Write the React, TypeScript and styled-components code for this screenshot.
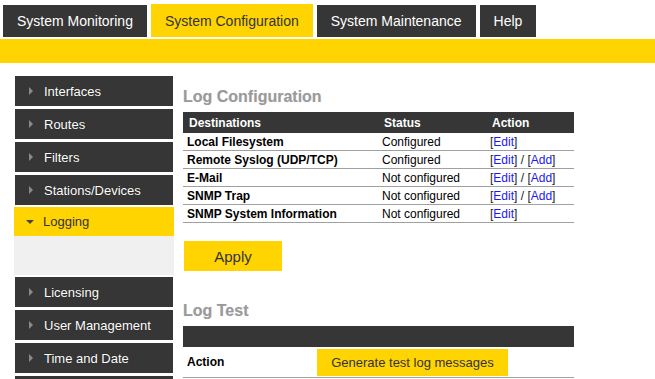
import React from "react";
import styled, { createGlobalStyle } from "styled-components";

const GlobalStyle = createGlobalStyle`
  body {
    margin: 0;
    background: #fff;
    font-family: "Liberation Sans", Arial, sans-serif;
  }
`;

const dark = "#363636";
const yellow = "#ffd400";

const Page = styled.div`
  width: 655px;
  height: 379px;
  overflow: hidden;
`;

const TabBar = styled.div`
  display: flex;
  align-items: flex-end;
  gap: 4px;
  padding: 4px 0 0 3px;
  height: 33px;
  margin-bottom: 2px;
`;

const Tab = styled.div<{ $active?: boolean }>`
  height: ${(p) => (p.$active ? 33 : 32)}px;
  padding: 0 14px;
  display: flex;
  align-items: center;
  font-size: 14px;
  background: ${(p) => (p.$active ? yellow : dark)};
  color: ${(p) => (p.$active ? "#333" : "#fff")};
`;

const SubBar = styled.div`
  height: 24px;
  background: ${yellow};
`;

const Body = styled.div`
  display: grid;
  grid-template-columns: 160px 1fr;
  column-gap: 9px;
  padding: 13px 0 0 14px;
`;

const Side = styled.div`
  display: flex;
  flex-direction: column;
`;

const SideItem = styled.div<{ $open?: boolean; $gap?: number }>`
  height: ${(p) => (p.$open ? 29 : 30)}px;
  margin: ${(p) => (p.$open ? "0" : `0 1px ${p.$gap ?? 3}px 1px`)};
  background: ${(p) => (p.$open ? yellow : dark)};
  color: ${(p) => (p.$open ? "#333" : "#fff")};
  text-shadow: ${(p) => (p.$open ? "none" : "0 0 1px rgba(0,0,0,0.6)")};
  display: flex;
  align-items: center;
  font-size: 13px;
  padding-left: ${(p) => (p.$open ? 12 : 14)}px;
  flex-shrink: 0;
`;

const Arrow = styled.span<{ $open?: boolean }>`
  width: 0;
  height: 0;
  ${(p) =>
    p.$open
      ? `border-left: 4px solid transparent;
         border-right: 4px solid transparent;
         border-top: 4px solid #444;
         margin-right: 9px;`
      : `border-top: 4px solid transparent;
         border-bottom: 4px solid transparent;
         border-left: 4px solid #8a8a8a;
         margin-right: 11px;`}
`;

const SubPanel = styled.div`
  height: 39px;
  background: #f0f0f0;
  margin-bottom: 2px;
  flex-shrink: 0;
`;

const Main = styled.div`
  width: 391px;
`;

const Heading = styled.h2<{ $top: number }>`
  margin: ${(p) => p.$top}px 0 0 0;
  font-size: 16px;
  font-weight: bold;
  color: #9a9a9a;
  text-shadow: 0 0 1px rgba(0, 0, 0, 0.15);
  line-height: 19px;
  height: 25px;
`;

const Table = styled.table`
  width: 391px;
  border-collapse: collapse;
  font-size: 12px;
  color: #000;
`;

const Th = styled.th<{ $w?: number }>`
  background: ${dark};
  color: #fff;
  text-align: left;
  font-weight: bold;
  height: 21px;
  padding: 0 0 0 6px;
  ${(p) => (p.$w ? `width: ${p.$w}px;` : "")}
`;

const Td = styled.td<{ $bold?: boolean }>`
  height: 17px;
  padding: 0 0 0 4px;
  border-bottom: 1px solid #a0a0a0;
  font-weight: ${(p) => (p.$bold ? "bold" : "normal")};
  white-space: nowrap;
`;

const Link = styled.a`
  color: #1a1aee;
  text-decoration: none;
`;

const Bracket = styled.span`
  color: #222;
`;

const YellowButton = styled.button<{ $w: number; $h: number; $size: number }>`
  width: ${(p) => p.$w}px;
  height: ${(p) => p.$h}px;
  background: ${yellow};
  border: none;
  color: #333;
  font-family: "Liberation Sans", Arial, sans-serif;
  font-size: ${(p) => p.$size}px;
  padding: 0;
  cursor: pointer;
`;

const ApplyWrap = styled.div`
  margin: 18px 0 0 1px;
  height: 30px;
`;

const ActionCell = styled.td`
  width: 130px;
  height: 30px;
  padding: 0 0 0 4px;
  border-bottom: 1px solid #a0a0a0;
  font-weight: bold;
`;

const ButtonCell = styled.td`
  height: 30px;
  padding: 0;
  border-bottom: 1px solid #a0a0a0;
  vertical-align: middle;
`;

const tabs = ["System Monitoring", "System Configuration", "System Maintenance", "Help"];
const topItems = ["Interfaces", "Routes", "Filters", "Stations/Devices"];
const bottomItems = ["Licensing", "User Management", "Time and Date"];

const rows = [
  { dest: "Local Filesystem", status: "Configured", add: false },
  { dest: "Remote Syslog (UDP/TCP)", status: "Configured", add: true },
  { dest: "E-Mail", status: "Not configured", add: true },
  { dest: "SNMP Trap", status: "Not configured", add: true },
  { dest: "SNMP System Information", status: "Not configured", add: false },
];

function Action({ add }: { add: boolean }) {
  return (
    <>
      <Bracket>[</Bracket>
      <Link href="#">Edit</Link>
      <Bracket>]</Bracket>
      {add && (
        <>
          <Bracket> / [</Bracket>
          <Link href="#">Add</Link>
          <Bracket>]</Bracket>
        </>
      )}
    </>
  );
}

export default function App() {
  return (
    <Page>
      <GlobalStyle />
      <TabBar>
        {tabs.map((t) => (
          <Tab key={t} $active={t === "System Configuration"}>
            {t}
          </Tab>
        ))}
      </TabBar>
      <SubBar />
      <Body>
        <Side>
          {topItems.map((i, idx) => (
            <SideItem key={i} $gap={idx === topItems.length - 1 ? 2 : 3}>
              <Arrow />
              {i}
            </SideItem>
          ))}
          <SideItem $open>
            <Arrow $open />
            Logging
          </SideItem>
          <SubPanel />
          {bottomItems.map((i) => (
            <SideItem key={i}>
              <Arrow />
              {i}
            </SideItem>
          ))}
          <SideItem />
        </Side>
        <Main>
          <Heading $top={11}>Log Configuration</Heading>
          <Table>
            <thead>
              <tr>
                <Th $w={189}>Destinations</Th>
                <Th $w={102}>Status</Th>
                <Th>Action</Th>
              </tr>
            </thead>
            <tbody>
              {rows.map((r) => (
                <tr key={r.dest}>
                  <Td $bold>{r.dest}</Td>
                  <Td>{r.status}</Td>
                  <Td>
                    <Action add={r.add} />
                  </Td>
                </tr>
              ))}
            </tbody>
          </Table>
          <ApplyWrap>
            <YellowButton $w={98} $h={30} $size={15}>
              Apply
            </YellowButton>
          </ApplyWrap>
          <Heading $top={30}>Log Test</Heading>
          <Table>
            <thead>
              <tr>
                <Th colSpan={2} />
              </tr>
            </thead>
            <tbody>
              <tr>
                <ActionCell>Action</ActionCell>
                <ButtonCell>
                  <YellowButton $w={191} $h={27} $size={13}>
                    Generate test log messages
                  </YellowButton>
                </ButtonCell>
              </tr>
            </tbody>
          </Table>
        </Main>
      </Body>
    </Page>
  );
}
